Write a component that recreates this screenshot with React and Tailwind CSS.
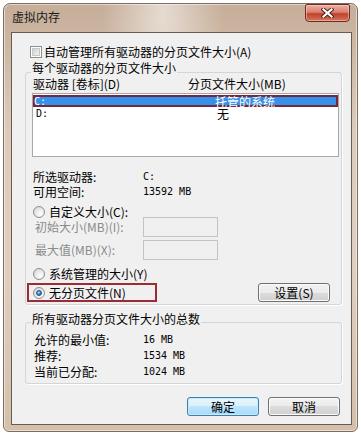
import React from "react";

// 虚拟内存 dialog (Win7 style)

function Radio({ checked }) {
  return (
    <span className="inline-flex h-[12px] w-[12px] shrink-0 items-center justify-center rounded-full border border-[#8e8f8f] bg-[radial-gradient(circle_at_65%_70%,#ffffff_0%,#e6e6e6_55%,#cdcdcd_100%)]">
      {checked && (
        <span className="h-[6px] w-[6px] rounded-full border border-[#1d4f7c] bg-[radial-gradient(circle_at_40%_35%,#b5e0fa_0%,#3d8ad0_50%,#174a7a_100%)]" />
      )}
    </span>
  );
}

function Checkbox() {
  return (
    <span className="inline-flex h-[12px] w-[12px] shrink-0 items-center justify-center border border-[#8e8f8f] bg-white">
      <span className="h-[8px] w-[8px] border border-[#c8c8c8] bg-[linear-gradient(135deg,#cfcfcf_0%,#f4f4f4_100%)]" />
    </span>
  );
}

function Button({ children, primary }) {
  return (
    <button
      className={
        primary
          ? "h-[19px] w-[72px] rounded-[3px] border border-[#3c7fb1] bg-[linear-gradient(#eaf6fd_0%,#d9f0fc_50%,#bee6fd_50%,#a7d9f5_100%)] text-[12px] leading-[16px] text-black shadow-[inset_0_0_0_1px_#c6ecfc]"
          : "h-[19px] w-[72px] rounded-[3px] border border-[#707070] bg-[linear-gradient(#f2f2f2_0%,#ebebeb_50%,#dddddd_50%,#cfcfcf_100%)] text-[12px] leading-[16px] text-black shadow-[inset_0_0_0_1px_#fbfbfb]"
      }
    >
      {children}
    </button>
  );
}

function CloseButton() {
  return (
    <div className="mr-[2px] flex h-[18px] w-[45px] items-center justify-center rounded-b-[4px] rounded-t-[2px] border border-[#6e2a20] bg-[linear-gradient(#eab0a2_0%,#d9816f_45%,#c2412c_55%,#d47560_100%)] shadow-[inset_0_0_0_1px_rgba(255,220,210,0.5)]">
      <svg width="13" height="10" viewBox="0 0 13 10">
        <path d="M2.5 1.5 L10.5 8.5 M10.5 1.5 L2.5 8.5" stroke="#4d1c14" strokeWidth="4" strokeLinecap="square" />
        <path d="M2.5 1.5 L10.5 8.5 M10.5 1.5 L2.5 8.5" stroke="#ffffff" strokeWidth="2.2" strokeLinecap="square" />
      </svg>
    </div>
  );
}

const mono = "font-['DejaVu_Sans_Mono',monospace] text-[10px]";

export default function App() {
  return (
    <div className="h-[437px] w-[361px] bg-white pl-[3px] pt-[3px] font-['Noto_Sans_CJK_SC',sans-serif] text-[12px] leading-[16px] text-black">
      <div className="flex h-[429px] w-[355px] flex-col rounded-b-[6px] rounded-t-[7px] border border-[#7d6d60] bg-[radial-gradient(ellipse_at_45%_2%,rgba(255,255,255,0.55)_0%,rgba(255,255,255,0)_22%),linear-gradient(180deg,#c6ae99_0%,#dccbbb_30%,#e0cfc0_60%,#d5bfab_100%)] pb-[6px] pl-[7px] pr-[5px] shadow-[inset_0_0_0_1px_rgba(255,255,255,0.5)]">
        {/* title bar */}
        <div className="flex h-[28px] shrink-0 items-start justify-between">
          <span className="ml-[1px] mt-[5px] text-[#1a1a1a]">虚拟内存</span>
          <CloseButton />
        </div>

        {/* client area */}
        <div className="flex flex-1 flex-col border border-[#6a5b50] bg-[#f0f0f0]">
          <div className="mt-[11px] flex h-[16px] items-center gap-[2px] pl-[18px]">
            <Checkbox />
            <span>自动管理所有驱动器的分页文件大小(A)</span>
          </div>

          {/* group 1 */}
          <div className="relative ml-[13px] mt-[12px] w-[317px] rounded-[3px] border border-[#d5d5d5] pb-[2px] shadow-[1px_1px_0_#ffffff]">
            <span className="absolute left-[5px] top-[-13px] bg-[#f0f0f0] px-[1px]">每个驱动器的分页文件大小</span>
            <div className="mt-[3px] flex h-[16px] pl-[7px]">
              <span className="w-[155px]">驱动器 [卷标](D)</span>
              <span>分页文件大小(MB)</span>
            </div>
            <div className="ml-[6px] mt-[1px] h-[64px] w-[307px] border border-[#a5a9ae] bg-white pt-[1px]">
              <div className="flex h-[12px] items-center bg-[#3591ea] pl-[1px] leading-[11px] text-white ring-2 ring-inset ring-[#7b2636]">
                <span className={"w-[181px] " + mono}>C:</span>
                <span>托管的系统</span>
              </div>
              <div className="flex h-[12px] items-center pl-[3px] leading-[11px]">
                <span className={"w-[181px] " + mono}>D:</span>
                <span>无</span>
              </div>
            </div>

            <div className="mt-[12px] flex h-[15px] items-center pl-[7px] leading-[14px]">
              <span className="w-[110px]">所选驱动器:</span>
              <span className={mono}>C:</span>
            </div>
            <div className="flex h-[15px] items-center pl-[7px] leading-[14px]">
              <span className="w-[110px]">可用空间:</span>
              <span className={mono}>13592 MB</span>
            </div>

            <div className="mt-[7px] flex h-[12px] items-center gap-[4px] pl-[7px] leading-[12px]">
              <Radio />
              <span>自定义大小(C):</span>
            </div>
            <div className="mt-[-1px] flex h-[20px] items-center pl-[9px] leading-[14px]">
              <span className="w-[108px] text-[#8b8b8b]">初始大小(MB)(I):</span>
              <span className="h-[20px] w-[75px] border border-[#c3c3c3] bg-[#f0f0f0]" />
            </div>
            <div className="mt-[3px] flex h-[20px] items-center pl-[9px] leading-[14px]">
              <span className="w-[108px] text-[#8b8b8b]">最大值(MB)(X):</span>
              <span className="h-[20px] w-[75px] border border-[#c3c3c3] bg-[#f0f0f0]" />
            </div>

            <div className="mt-[6px] flex h-[16px] items-center gap-[4px] pl-[7px]">
              <Radio />
              <span>系统管理的大小(Y)</span>
            </div>
            <div className="mt-[1px] flex h-[19px] items-center justify-between pr-[11px]">
              <div className="ml-[1px] flex h-[19px] w-[130px] items-center gap-[4px] border-2 border-[#9b2b35] pl-[4px]">
                <Radio checked />
                <span>无分页文件(N)</span>
              </div>
              <Button>设置(S)</Button>
            </div>
          </div>

          {/* group 2 */}
          <div className="relative ml-[13px] mt-[17px] w-[317px] rounded-[3px] border border-[#d5d5d5] pb-[3px] pt-[9px] shadow-[1px_1px_0_#ffffff]">
            <span className="absolute left-[5px] top-[-12px] bg-[#f0f0f0] px-[1px]">所有驱动器分页文件大小的总数</span>
            <div className="flex h-[16px] items-center pl-[8px]">
              <span className="w-[109px]">允许的最小值:</span>
              <span className={mono}>16 MB</span>
            </div>
            <div className="flex h-[16px] items-center pl-[8px]">
              <span className="w-[109px]">推荐:</span>
              <span className={mono}>1534 MB</span>
            </div>
            <div className="flex h-[16px] items-center pl-[8px]">
              <span className="w-[109px]">当前已分配:</span>
              <span className={mono}>1024 MB</span>
            </div>
          </div>

          <div className="mt-[13px] flex justify-end gap-[9px] pr-[11px]">
            <Button primary>确定</Button>
            <Button>取消</Button>
          </div>
        </div>
      </div>
    </div>
  );
}
